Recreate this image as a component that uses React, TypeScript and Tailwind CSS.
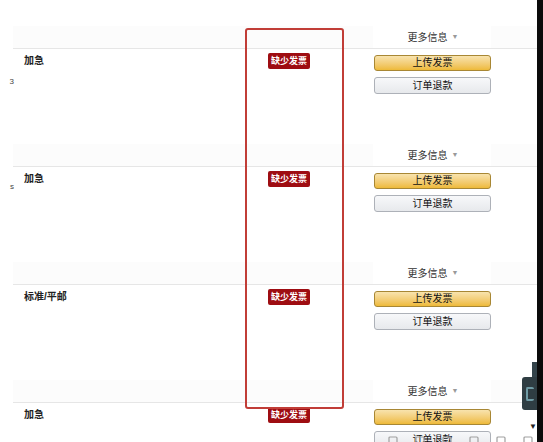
import React from "react";

type Order = { shipping: string; edge?: string };

const orders: Order[] = [
  { shipping: "加急", edge: "3" },
  { shipping: "加急", edge: "s" },
  { shipping: "标准/平邮" },
  { shipping: "加急" },
];

function MoreInfo() {
  return (
    <div className="flex h-[22px] bg-[#fcfcfc]">
      <div className="w-[360px]" />
      <div className="flex w-[118px] items-center justify-center gap-1 bg-white pl-[2px] text-[10px] text-[#333]">
        更多信息 <span className="text-[7px] text-[#999]">▼</span>
      </div>
    </div>
  );
}

function OrderRow({ order }: { order: Order }) {
  return (
    <div>
      <MoreInfo />
      <div className="flex h-[96px] border-t border-[#e6e6e6]">
        <div className="w-[255px] pl-[11px] pt-[6px] text-[10px] leading-[12px] font-semibold text-[#222]">
          {order.shipping}
        </div>
        <div className="flex w-[106px] items-start pt-[4px]">
          <span className="block rounded-[2px] bg-[#9e0d12] px-[3px] text-[9px] leading-[16px] font-bold text-white">
            缺少发票
          </span>
        </div>
        <div className="flex w-[117px] flex-col gap-[6px] pt-[6px]">
          <button className="h-[16px] rounded-[3px] border border-[#a88734] bg-gradient-to-b from-[#f8e3ad] to-[#eeba37] text-[10px] leading-none text-[#111]">
            上传发票
          </button>
          <button className="h-[17px] rounded-[3px] border border-[#adb1b8] bg-gradient-to-b from-[#f7f8fa] to-[#e7e9ec] text-[10px] leading-none text-[#111]">
            订单退款
          </button>
        </div>
      </div>
    </div>
  );
}

function ToolIcon() {
  return (
    <svg width="10" height="6" viewBox="0 0 10 6" className="text-[#a0a0a0]">
      <rect x="1" y="1" width="8" height="8" rx="1" fill="none" stroke="currentColor" strokeWidth="1.2" />
    </svg>
  );
}

export default function App() {
  return (
    <div
      className="relative flex h-[442px] w-[543px] overflow-hidden bg-white"
      style={{ fontFamily: '"Liberation Sans", "Noto Sans CJK SC", sans-serif' }}
    >
      <div className="flex w-[13px] flex-col">
        <div className="h-[26px]" />
        {orders.map((o, i) => (
          <div key={i} className="h-[118px]">
            <div className="h-[49px]" />
            <div className="-mr-[1px] pt-[6px] text-right text-[8px] leading-none text-[#444]">{o.edge ?? ""}</div>
          </div>
        ))}
      </div>

      <div className="flex-1">
        <div className="h-[26px]" />
        {orders.map((o, i) => (
          <OrderRow key={i} order={o} />
        ))}
      </div>

      <div className="w-[6px] bg-[#0b0b0b]" />

      {/* annotation frame */}
      <div className="absolute left-[245px] top-[28px] h-[381px] w-[99px] rounded-[3px] border-2 border-[#c13d37]" />

      {/* floating side tab */}
      <div className="absolute left-[532px] top-[362px] h-[18px] w-[5px] bg-[#33434a]" />
      <div className="absolute left-[522px] top-[377px] flex h-[33px] w-[15px] items-center justify-center rounded-l-[3px] bg-[#2f3d43]">
        <div className="h-[14px] w-[8px] rounded-[2px] border-2 border-r-0 border-[#6f9ba5]" />
      </div>
      <div className="absolute left-[529px] top-[421px] text-[8px] text-[#222]">▼</div>

      {/* bottom toolbar, cut off */}
      <div className="absolute bottom-0 left-[388px] flex gap-[17px]">
        <ToolIcon />
        <ToolIcon />
        <ToolIcon />
        <ToolIcon />
        <ToolIcon />
        <ToolIcon />
      </div>
    </div>
  );
}
